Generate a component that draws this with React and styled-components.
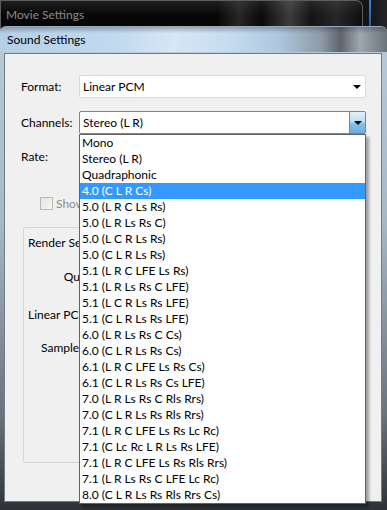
import React from "react";
import styled, { createGlobalStyle } from "styled-components";

const GlobalStyle = createGlobalStyle`
  html, body { margin: 0; padding: 0; background: #050505; }
  body { width: 387px; height: 510px; overflow: hidden; }
  * { box-sizing: border-box; }
`;

const FONT = `"Lato", "Liberation Sans", sans-serif`;

const Desktop = styled.div`
  position: relative;
  width: 387px;
  height: 510px;
  overflow: hidden;
  background: linear-gradient(90deg, #070707 0%, #141414 95%, #242424 100%);
  font-family: ${FONT};
  font-size: 12px;
  color: #000;
`;

const BackWindow = styled.div`
  position: absolute;
  left: 0;
  top: 0;
  width: 363px;
  height: 40px;
  border: 1px solid #5e5e5e;
  border-bottom: none;
  border-radius: 0 7px 0 0;
  background:
    linear-gradient(90deg, rgba(0,0,0,0) 0%, rgba(0,0,0,0) 60%, rgba(110,110,110,0.3) 66%, rgba(20,20,20,0.2) 72%, rgba(140,140,140,0.4) 80%, rgba(50,50,50,0.3) 86%, rgba(110,110,110,0.3) 93%, rgba(30,30,30,0.3) 100%),
    linear-gradient(180deg, #1e1e1e 0%, #080808 35%, #030303 100%);
  padding: 6px 0 0 5px;
`;

const BackTitle = styled.div`
  color: #8a8a8a;
  font-size: 12px;
  line-height: 16px;
`;

const EdgeLine = styled.div`
  position: absolute;
  left: 369px;
  top: 0;
  width: 2px;
  height: 36px;
  background: linear-gradient(180deg, #3f7fd0, #1d4f90);
`;

const Window = styled.div`
  position: absolute;
  left: 0;
  top: 26px;
  width: 387px;
  height: 484px;
  display: flex;
  flex-direction: column;
  border-radius: 6px 6px 0 0;
  overflow: hidden;
  border-top: 1px solid #9aa9b8;
  background: linear-gradient(180deg, #b9cadb 0%, #aab8c6 40%, #6b737c 80%, #2e3237 100%);
`;

const TitleBar = styled.div`
  height: 25px;
  flex: none;
  display: flex;
  align-items: center;
  padding-left: 7px;
  background:
    linear-gradient(180deg, rgba(40,50,60,0.35) 0%, rgba(255,255,255,0) 25%),
    linear-gradient(90deg, #b5cfe7 0%, #c1daef 30%, #d6e7f5 45%, #c4dbef 60%, #aec7de 72%, #8e9aa6 83%, #5d646c 88%, #9ea6ae 93%, #6b737b 100%);
`;

const TitleText = styled.span`
  font-size: 12px;
  color: #000;
`;

const Body = styled.div`
  flex: 1;
  display: flex;
  padding: 1px 5px 8px 4px;
`;

const Client = styled.div`
  flex: 1;
  background: #f0f0f0;
  border: 1px solid #6f7d8b;
  padding: 21px 15px 0 16px;
  display: flex;
  flex-direction: column;
`;

const FieldRow = styled.div`
  display: grid;
  grid-template-columns: 58px 1fr;
  align-items: center;
  height: 23px;
  margin-top: ${(p) => p.$gap || 0}px;
`;

const Label = styled.span`
  color: #000;
`;

const Combo = styled.div`
  position: relative;
  height: 23px;
  background: #fff;
  border: 1px solid ${(p) => (p.$focused ? "#5b8cbd" : "#dadada")};
  border-radius: 2px;
  display: flex;
  align-items: center;
  padding-left: 3px;
`;

const ComboButton = styled.div`
  position: absolute;
  right: 0;
  top: 0;
  bottom: 0;
  width: ${(p) => (p.$pressed ? 16 : 17)}px;
  display: flex;
  align-items: center;
  justify-content: center;
  border-left: ${(p) => (p.$pressed ? "1px solid #5b8cbd" : "none")};
  background: ${(p) =>
    p.$pressed
      ? "linear-gradient(180deg, #e2f1fb 0%, #bcdff5 45%, #86c2ea 55%, #6aaee0 100%)"
      : "transparent"};
`;

const Arrow = styled.span`
  width: 0;
  height: 0;
  border-left: 4px solid transparent;
  border-right: 4px solid transparent;
  border-top: 4px solid #000;
`;

const CheckRow = styled.div`
  display: flex;
  align-items: center;
  gap: 3px;
  margin: 29px 0 0 19px;
  height: 13px;
  color: #8d8d8d;
`;

const Check = styled.span`
  width: 13px;
  height: 13px;
  border: 1px solid #b8b8b8;
  background: linear-gradient(135deg, #e4e4e4, #f6f6f6);
`;

const GroupBox = styled.div`
  margin: 17px 0 0 2px;
  height: 236px;
  border: 1px solid #d5d5d5;
  border-radius: 3px;
  padding: 7px 4px 0 4px;
  display: flex;
  flex-direction: column;
`;

const GroupTitle = styled.div`
  height: 16px;
  line-height: 16px;
`;

const SubRow = styled.div`
  display: grid;
  grid-template-columns: 77px 1fr;
  margin-top: ${(p) => p.$gap}px;
  height: 16px;
  line-height: 16px;
`;

const RightLabel = styled.span`
  text-align: right;
`;

const SubHeading = styled.div`
  margin-top: ${(p) => p.$gap}px;
  height: 16px;
  line-height: 16px;
  white-space: nowrap;
`;

const ListBox = styled.ul`
  position: absolute;
  left: 79px;
  top: 134px;
  width: 287px;
  margin: 0;
  padding: 0;
  list-style: none;
  background: #fff;
  border: 1px solid #646464;
  box-shadow: 3px 3px 3px rgba(0, 0, 0, 0.35);
`;

const Option = styled.li`
  height: 16px;
  line-height: 16px;
  padding-left: 2px;
  white-space: nowrap;
  background: ${(p) => (p.$selected ? "#3399ff" : "transparent")};
  color: ${(p) => (p.$selected ? "#fff" : "#000")};
`;

const channels = [
  "Mono",
  "Stereo (L R)",
  "Quadraphonic",
  "4.0 (C L R Cs)",
  "5.0 (L R C Ls Rs)",
  "5.0 (L R Ls Rs C)",
  "5.0 (L C R Ls Rs)",
  "5.0 (C L R Ls Rs)",
  "5.1 (L R C LFE Ls Rs)",
  "5.1 (L R Ls Rs C LFE)",
  "5.1 (L C R Ls Rs LFE)",
  "5.1 (C L R Ls Rs LFE)",
  "6.0 (L R Ls Rs C Cs)",
  "6.0 (C L R Ls Rs Cs)",
  "6.1 (L R C LFE Ls Rs Cs)",
  "6.1 (C L R Ls Rs Cs LFE)",
  "7.0 (L R Ls Rs C Rls Rrs)",
  "7.0 (C L R Ls Rs Rls Rrs)",
  "7.1 (L R C LFE Ls Rs Lc Rc)",
  "7.1 (C Lc Rc L R Ls Rs LFE)",
  "7.1 (L R C LFE Ls Rs Rls Rrs)",
  "7.1 (L R Ls Rs C LFE Lc Rc)",
  "8.0 (C L R Ls Rs Rls Rrs Cs)",
];

export default function App() {
  return (
    <>
      <GlobalStyle />
      <Desktop>
        <BackWindow>
          <BackTitle>Movie Settings</BackTitle>
        </BackWindow>
        <EdgeLine />
        <Window>
          <TitleBar>
            <TitleText>Sound Settings</TitleText>
          </TitleBar>
          <Body>
            <Client>
              <FieldRow>
                <Label>Format:</Label>
                <Combo>
                  Linear PCM
                  <ComboButton>
                    <Arrow />
                  </ComboButton>
                </Combo>
              </FieldRow>
              <FieldRow $gap={13}>
                <Label>Channels:</Label>
                <Combo $focused>
                  Stereo (L R)
                  <ComboButton $pressed>
                    <Arrow />
                  </ComboButton>
                </Combo>
              </FieldRow>
              <FieldRow $gap={11}>
                <Label>Rate:</Label>
                <Combo>
                  <ComboButton>
                    <Arrow />
                  </ComboButton>
                </Combo>
              </FieldRow>
              <CheckRow>
                <Check />
                <span>Show</span>
              </CheckRow>
              <GroupBox>
                <GroupTitle>Render Settings</GroupTitle>
                <SubRow $gap={18}>
                  <RightLabel>Quality:</RightLabel>
                </SubRow>
                <SubHeading $gap={22}>Linear PCM Settings</SubHeading>
                <SubRow $gap={17}>
                  <RightLabel>Sample size:</RightLabel>
                </SubRow>
              </GroupBox>
            </Client>
          </Body>
        </Window>
        <ListBox>
          {channels.map((c, i) => (
            <Option key={c} $selected={i === 3}>
              {c}
            </Option>
          ))}
        </ListBox>
      </Desktop>
    </>
  );
}
